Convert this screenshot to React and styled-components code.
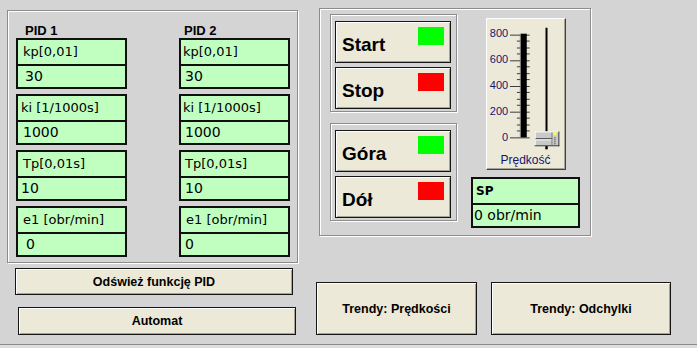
import React from "react";
import styled, { createGlobalStyle, css } from "styled-components";

const Global = createGlobalStyle`
  html, body { margin: 0; padding: 0; background: #d4d4d4; }
  #root { width: 697px; height: 348px; }
`;

const etched = css`
  box-sizing: border-box;
  border: 1px solid #8c8c8c;
  box-shadow: inset 1px 1px 0 #fff, 1px 1px 0 #fff;
`;

const winButton = css`
  box-sizing: border-box;
  background: #ece9d8;
  border: 1px solid #151515;
  box-shadow: inset 1px 1px 0 #ffffff, inset -1px -1px 0 #a7a496;
  color: #000;
  margin: 0;
  padding: 0;
  cursor: default;
`;

const Screen = styled.div`
  width: 697px;
  height: 348px;
  box-sizing: border-box;
  background: #d4d4d4;
  display: flex;
  align-items: flex-start;
  font-family: "Liberation Sans", Arial, sans-serif;
  box-shadow: inset 0 -3px 0 #dedede, inset 0 -4px 0 #8a8a8a;
  overflow: hidden;
`;

const LeftColumn = styled.div`
  display: flex;
  flex-direction: column;
  align-items: flex-start;
  margin-left: 7px;
  padding-top: 10px;
  width: 291px;
`;

const PidPanel = styled.div`
  ${etched};
  width: 291px;
  height: 253px;
  padding: 13px 0 0 8px;
  display: grid;
  grid-template-columns: 111px 111px;
  column-gap: 52px;
  align-items: start;
`;

const PidColumn = styled.div`
  display: flex;
  flex-direction: column;
`;

const PidTitle = styled.div`
  font: bold 13px/14px "Liberation Sans", Arial, sans-serif;
  color: #000;
  padding-left: ${(p) => p.$indent}px;
`;

const BoxStack = styled.div`
  display: flex;
  flex-direction: column;
  gap: 5px;
`;

const DataBox = styled.div`
  box-sizing: border-box;
  width: ${(p) => p.$w}px;
  height: 51px;
  border: 2px solid #101010;
  background: #c0ffc0;
  display: flex;
  flex-direction: column;
`;

const BoxHead = styled.div`
  height: 24px;
  border-bottom: 2px solid #101010;
  font: ${(p) => (p.$bold ? "bold 12px" : "13px")} / 24px "DejaVu Sans", Verdana, sans-serif;
  color: #000;
  padding-left: ${(p) => p.$indent}px;
  white-space: nowrap;
`;

const BoxValue = styled.div`
  flex: 1;
  font: 14px/21px "DejaVu Sans", Verdana, sans-serif;
  color: #000;
  padding-left: ${(p) => p.$indent}px;
  white-space: nowrap;
`;

const WideButton = styled.button`
  ${winButton};
  width: 278px;
  height: ${(p) => p.$h}px;
  margin-left: ${(p) => p.$x}px;
  margin-top: ${(p) => p.$y}px;
  font: bold 12.5px "Liberation Sans", Arial, sans-serif;
`;

const RightColumn = styled.div`
  display: flex;
  flex-direction: column;
  align-items: flex-start;
  margin-left: 18px;
  padding-top: 8px;
`;

const ControlPanel = styled.div`
  ${etched};
  margin-left: 3px;
  width: 272px;
  height: 228px;
  padding: 5px 0 0 10px;
  display: flex;
  align-items: flex-start;
`;

const GroupColumn = styled.div`
  display: flex;
  flex-direction: column;
  gap: 11px;
`;

const Group = styled.div`
  ${etched};
  width: 127px;
  height: 98px;
  padding: 6px 0 0 4px;
  display: flex;
  flex-direction: column;
  gap: 4px;
`;

const ActionButton = styled.button`
  ${winButton};
  width: 116px;
  height: 42px;
  display: flex;
  justify-content: space-between;
  align-items: flex-start;
  padding: 0 6px 0 6px;
  font: bold 19px/22px "Liberation Sans", Arial, sans-serif;
`;

const ActionLabel = styled.span`
  margin-top: 12px;
`;

const Lamp = styled.span`
  width: 26px;
  height: 18px;
  margin-top: 5px;
  background: ${(p) => (p.$on ? "#00ff00" : "#ff0000")};
`;

const SideColumn = styled.div`
  margin-left: 14px;
  width: 109px;
  display: flex;
  flex-direction: column;
  align-items: center;
`;

const SliderBox = styled.div`
  box-sizing: border-box;
  margin-top: 4px;
  width: 80px;
  height: 152px;
  background: #ece9d8;
  border: 1px solid;
  border-color: #ffffff #404040 #404040 #ffffff;
  box-shadow: inset -1px -1px 0 #a7a496;
  display: flex;
  flex-direction: column;
`;

const ScaleRow = styled.div`
  height: 135px;
  display: flex;
  align-items: flex-start;
`;

const ScaleLabels = styled.div`
  width: 22px;
  height: 116px;
  margin-top: 8px;
  display: flex;
  flex-direction: column;
  justify-content: space-between;
  align-items: flex-end;
  font: 11px/12px "Liberation Sans", Arial, sans-serif;
  color: #14146e;
`;

const Caption = styled.div`
  text-align: center;
  font: 12px/13px "Liberation Sans", Arial, sans-serif;
  color: #14146e;
`;

const SpBox = styled(DataBox)`
  margin-top: 7px;
`;

const TrendRow = styled.div`
  display: flex;
  gap: 14px;
  margin-top: 46px;
`;

const TrendButton = styled.button`
  ${winButton};
  width: ${(p) => p.$w}px;
  height: 53px;
  font: bold 12.5px "Liberation Sans", Arial, sans-serif;
`;

const pidColumns = [
  {
    title: "PID 1",
    titleIndent: 9,
    rows: [
      { head: "kp[0,01]", hi: 5, value: "30", vi: 7 },
      { head: "ki [1/1000s]", hi: 3, value: "1000", vi: 5 },
      { head: "Tp[0,01s]", hi: 5, value: "10", vi: 3 },
      { head: "e1 [obr/min]", hi: 5, value: "0", vi: 8 },
    ],
  },
  {
    title: "PID 2",
    titleIndent: 5,
    rows: [
      { head: "kp[0,01]", hi: 2, value: "30", vi: 4 },
      { head: "ki [1/1000s]", hi: 2, value: "1000", vi: 4 },
      { head: "Tp[0,01s]", hi: 4, value: "10", vi: 4 },
      { head: "e1 [obr/min]", hi: 5, value: "0", vi: 4 },
    ],
  },
];

function SliderGraphic() {
  const ticks = [];
  for (let j = 0; j <= 16; j++) {
    const y = 14.5 + j * 6.5;
    const major = j % 4 === 0;
    ticks.push(
      <line key={j} x1={major ? 2 : 9} x2={22} y1={Math.round(y) + 0.5} y2={Math.round(y) + 0.5} stroke="#3a3a3a" strokeWidth="1" />
    );
  }
  return (
    <svg width="57" height="135" viewBox="0 0 57 135">
      {ticks}
      <rect x="13" y="14" width="6" height="105" fill="#000" />
      <rect x="12" y="14" width="1" height="105" fill="#777" />
      <rect x="38" y="8" width="2" height="123" fill="#000" />
      <rect x="27" y="113" width="25" height="15" fill="#c9c9c9" />
      <rect x="27" y="113" width="25" height="1" fill="#fff" />
      <rect x="27" y="113" width="1" height="15" fill="#fff" />
      <rect x="27" y="127" width="25" height="1" fill="#404040" />
      <rect x="51" y="113" width="1" height="15" fill="#404040" />
      <rect x="28" y="120" width="17" height="1" fill="#202020" />
      <rect x="28" y="121" width="17" height="1" fill="#ffffff" />
      <rect x="44" y="114" width="1" height="13" fill="#808080" />
      <rect x="46" y="114" width="3" height="3" fill="#ffff40" />
      <rect x="47" y="119" width="1" height="1" fill="#202020" />
      <rect x="47" y="121" width="1" height="1" fill="#202020" />
      <rect x="47" y="123" width="1" height="1" fill="#202020" />
      <rect x="47" y="125" width="1" height="1" fill="#202020" />
      <rect x="38" y="128" width="2" height="3" fill="#000" />
    </svg>
  );
}

export default function App() {
  return (
    <>
      <Global />
      <Screen>
        <LeftColumn>
          <PidPanel>
            {pidColumns.map((col) => (
              <PidColumn key={col.title}>
                <PidTitle $indent={col.titleIndent}>{col.title}</PidTitle>
                <BoxStack>
                  {col.rows.map((r) => (
                    <DataBox key={r.head} $w={111}>
                      <BoxHead $indent={r.hi}>{r.head}</BoxHead>
                      <BoxValue $indent={r.vi}>{r.value}</BoxValue>
                    </DataBox>
                  ))}
                </BoxStack>
              </PidColumn>
            ))}
          </PidPanel>
          <WideButton $h={27} $x={8} $y={5}>Odśwież funkcję PID</WideButton>
          <WideButton $h={28} $x={11} $y={12}>Automat</WideButton>
        </LeftColumn>
        <RightColumn>
          <ControlPanel>
            <GroupColumn>
              <Group>
                <ActionButton>
                  <ActionLabel>Start</ActionLabel>
                  <Lamp $on />
                </ActionButton>
                <ActionButton>
                  <ActionLabel>Stop</ActionLabel>
                  <Lamp />
                </ActionButton>
              </Group>
              <Group>
                <ActionButton>
                  <ActionLabel>Góra</ActionLabel>
                  <Lamp $on />
                </ActionButton>
                <ActionButton>
                  <ActionLabel>Dół</ActionLabel>
                  <Lamp />
                </ActionButton>
              </Group>
            </GroupColumn>
            <SideColumn>
              <SliderBox>
                <ScaleRow>
                  <ScaleLabels>
                    <span>800</span>
                    <span>600</span>
                    <span>400</span>
                    <span>200</span>
                    <span>0</span>
                  </ScaleLabels>
                  <SliderGraphic />
                </ScaleRow>
                <Caption>Prędkość</Caption>
              </SliderBox>
              <SpBox $w={109}>
                <BoxHead $bold $indent={3}>SP</BoxHead>
                <BoxValue $indent={1}>0 obr/min</BoxValue>
              </SpBox>
            </SideColumn>
          </ControlPanel>
          <TrendRow>
            <TrendButton $w={161}>Trendy: Prędkości</TrendButton>
            <TrendButton $w={180}>Trendy: Odchylki</TrendButton>
          </TrendRow>
        </RightColumn>
      </Screen>
    </>
  );
}
